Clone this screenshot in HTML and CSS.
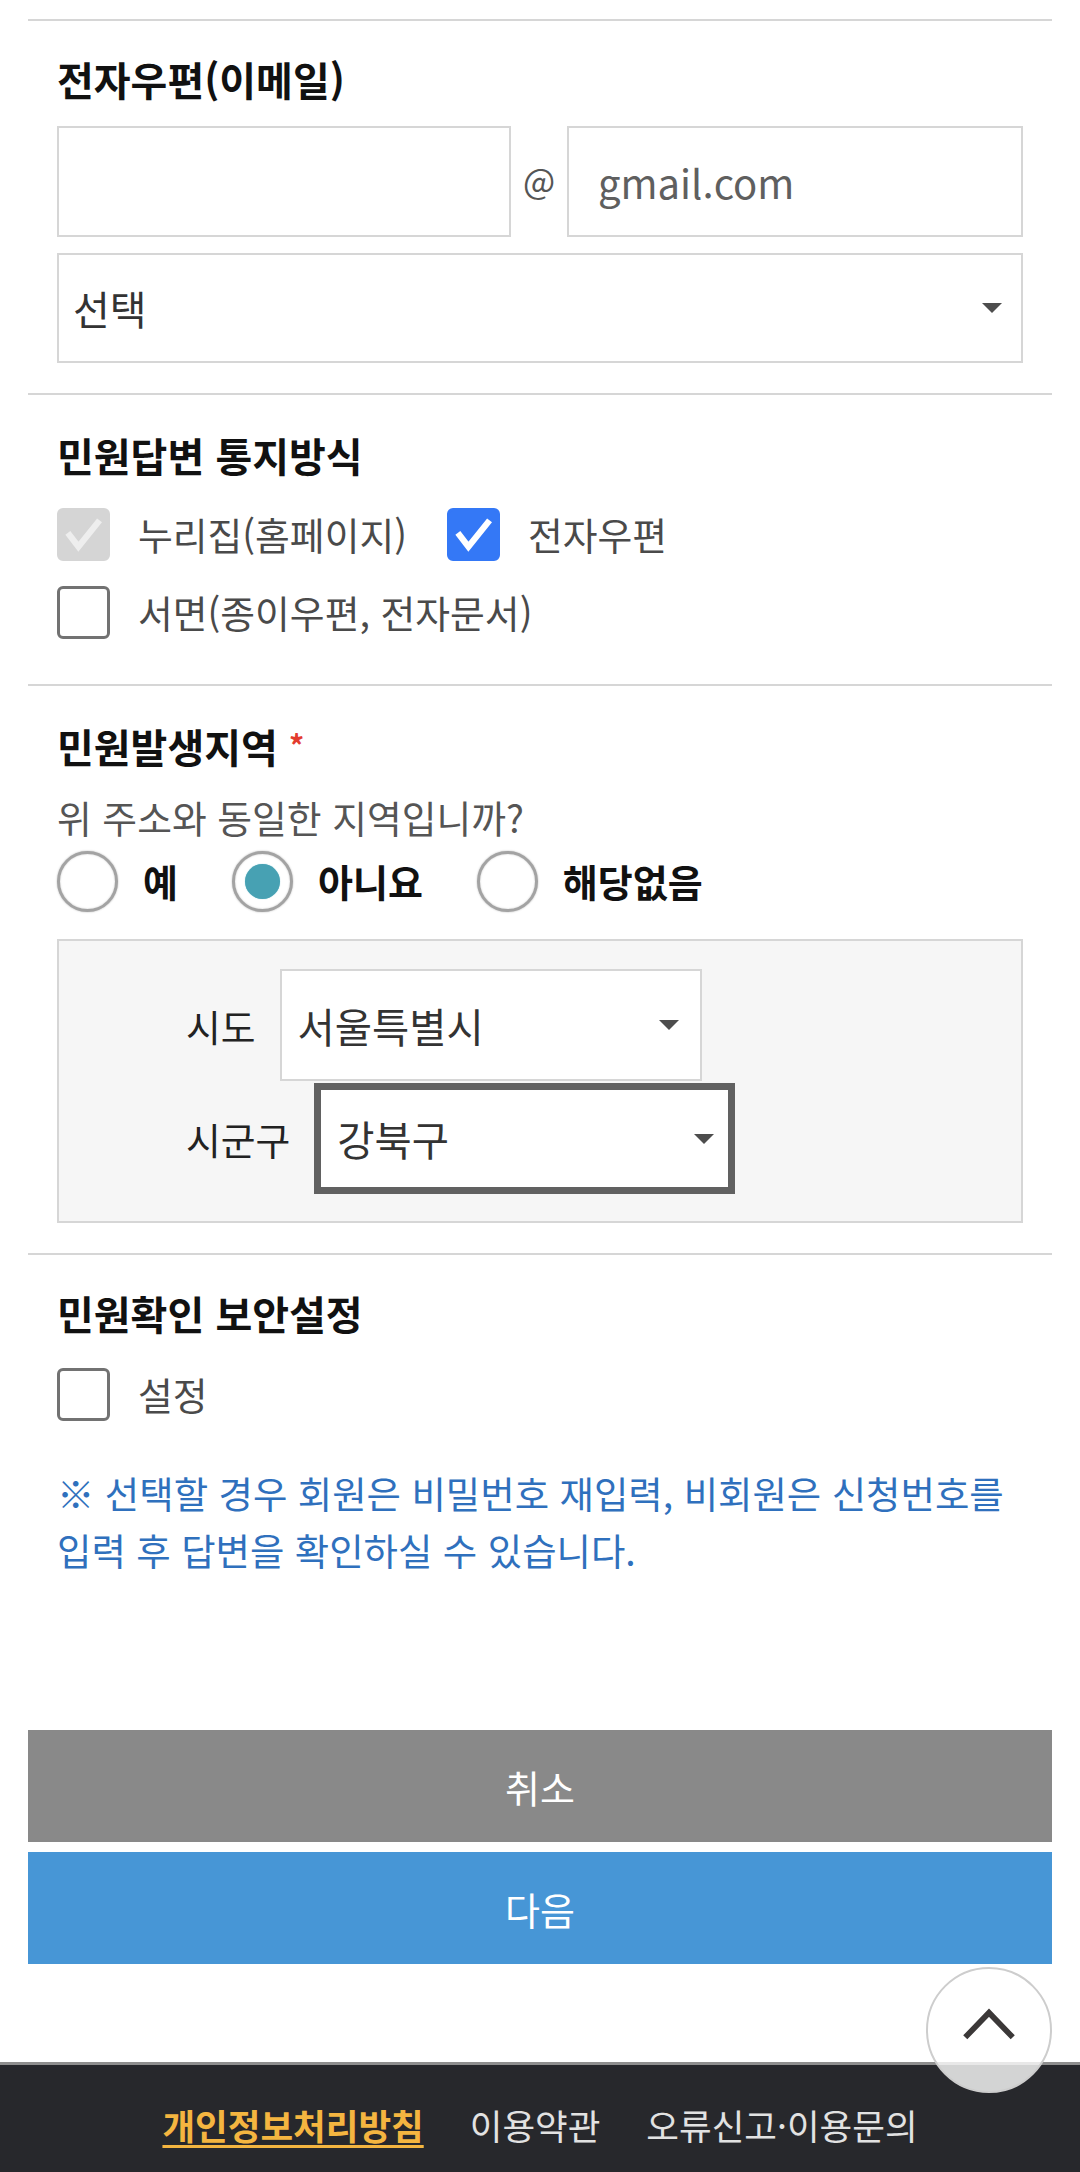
FILE: index.html
```html
<!DOCTYPE html>
<html lang="ko">
<head>
<meta charset="utf-8">
<title>민원 신청</title>
<link rel="stylesheet" href="styles.css">
</head>
<body>
<div class="page">
  <div class="content">
    <section class="sec sec-email">
      <h2 class="sec-title">전자우편(이메일)</h2>
      <div class="email-row">
        <div class="field"></div>
        <span class="at">@</span>
        <div class="field field-domain"><span class="placeholder">gmail.com</span></div>
      </div>
      <div class="select select-wide">
        <span class="select-text">선택</span>
        <span class="caret"></span>
      </div>
    </section>

    <section class="sec sec-notify">
      <h2 class="sec-title">민원답변 통지방식</h2>
      <div class="opt-row">
        <label class="opt">
          <span class="cb cb-disabled"><svg viewBox="0 0 24 24"><path d="M4 11.2 L9.4 18.2 L20.2 4.8"/></svg></span>
          <span class="opt-text">누리집(홈페이지)</span>
        </label>
        <label class="opt">
          <span class="cb cb-on"><svg viewBox="0 0 24 24"><path d="M4 11.2 L9.4 18.2 L20.2 4.8"/></svg></span>
          <span class="opt-text">전자우편</span>
        </label>
      </div>
      <div class="opt-row">
        <label class="opt">
          <span class="cb"></span>
          <span class="opt-text">서면(종이우편, 전자문서)</span>
        </label>
      </div>
    </section>

    <section class="sec sec-area">
      <h2 class="sec-title">민원발생지역 <span class="req">*</span></h2>
      <p class="question">위 주소와 동일한 지역입니까?</p>
      <div class="radio-row">
        <label class="radio-opt"><span class="radio"></span><span class="radio-text">예</span></label>
        <label class="radio-opt"><span class="radio radio-on"></span><span class="radio-text">아니요</span></label>
        <label class="radio-opt"><span class="radio"></span><span class="radio-text">해당없음</span></label>
      </div>
      <div class="area-box">
        <div class="area-row">
          <span class="area-label">시도</span>
          <div class="select select-area">
            <span class="select-text">서울특별시</span>
            <span class="caret"></span>
          </div>
        </div>
        <div class="area-row">
          <span class="area-label">시군구</span>
          <div class="select select-area select-focus">
            <span class="select-text">강북구</span>
            <span class="caret"></span>
          </div>
        </div>
      </div>
    </section>

    <section class="sec sec-secure">
      <h2 class="sec-title">민원확인 보안설정</h2>
      <div class="opt-row">
        <label class="opt">
          <span class="cb"></span>
          <span class="opt-text">설정</span>
        </label>
      </div>
      <p class="note">※ 선택할 경우 회원은 비밀번호 재입력, 비회원은 신청번호를 입력 후 답변을 확인하실 수 있습니다.</p>
    </section>

    <div class="buttons">
      <button class="btn btn-cancel" type="button">취소</button>
      <button class="btn btn-next" type="button">다음</button>
    </div>
  </div>

  <footer class="footer">
    <nav class="footer-links">
      <a class="f-link f-privacy" href="#">개인정보처리방침</a>
      <a class="f-link" href="#">이용약관</a>
      <a class="f-link" href="#">오류신고·이용문의</a>
    </nav>
  </footer>

  <button class="to-top" type="button" aria-label="맨 위로">
    <svg viewBox="0 0 60 40"><path d="M5 33 L30 7 L55 33"/></svg>
  </button>
</div>
</body>
</html>
```

FILE: styles.css
```css
* { box-sizing: border-box; }

html, body {
  margin: 0;
  padding: 0;
  background: #ffffff;
}

body {
  font-family: "Noto Sans CJK KR", "Noto Sans", sans-serif;
  color: #222;
  width: 1080px;
}

.page {
  position: relative;
  width: 1080px;
  height: 2172px;
  overflow: hidden;
}

.content {
  padding: 19px 28px 0;
}

.sec {
  border-top: 2px solid #d6d6d6;
  padding: 0 29px;
}

.sec-title {
  margin: 0;
  font-size: 40px;
  line-height: 50px;
  font-weight: 700;
  color: #111;
}

.req {
  color: #e33b2e;
  font-size: 30px;
  vertical-align: 6px;
}

/* email */
.sec-email { padding-top: 33px; padding-bottom: 30px; }

.email-row {
  display: flex;
  align-items: center;
  margin-top: 22px;
  height: 111px;
}

.field {
  flex: none;
  width: 454px;
  height: 111px;
  border: 2px solid #d6d6d6;
  background: #fff;
  display: flex;
  align-items: center;
}

.field-domain { width: 456px; padding-left: 29px; }

.placeholder {
  font-size: 40px;
  color: #5f5f5f;
}

.at {
  width: 56px;
  text-align: center;
  font-size: 34px;
  color: #555;
  line-height: 1;
  margin-top: -4px;
}

.select {
  display: flex;
  align-items: center;
  justify-content: space-between;
  background: #fff;
  border: 2px solid #d6d6d6;
}

.select-wide {
  margin-top: 16px;
  height: 110px;
  padding: 0 19px 0 14px;
}

.select-text {
  font-size: 40px;
  color: #333;
}

.caret {
  width: 0;
  height: 0;
  border-left: 10px solid transparent;
  border-right: 10px solid transparent;
  border-top: 10px solid #4d4d4d;
}

/* notify */
.sec-notify { padding-top: 35px; padding-bottom: 33px; }

.sec-notify .opt-row:first-of-type { margin-top: 15px; }

.opt-row {
  display: flex;
  align-items: center;
  height: 78px;
  gap: 40px;
}

.opt {
  display: flex;
  align-items: center;
  gap: 28px;
}

.cb {
  width: 53px;
  height: 53px;
  border: 3px solid #727272;
  border-radius: 6px;
  background: #fff;
  display: flex;
  align-items: center;
  justify-content: center;
}

.cb svg {
  width: 53px;
  height: 53px;
  fill: none;
  stroke-width: 3.2;
  stroke-linecap: butt;
  stroke-linejoin: miter;
}

.cb-disabled {
  background: #d5d5d5;
  border-color: #d5d5d5;
}

.cb-disabled svg { stroke: #eeeeee; }

.cb-on {
  background: #3478f6;
  border-color: #3478f6;
}

.cb-on svg { stroke: #ffffff; }

.opt-text {
  font-size: 37.8px;
  color: #4a4a4a;
  line-height: 50px;
}

/* area */
.sec-area { padding-top: 33px; padding-bottom: 30px; }

.question {
  margin: 21px 0 0;
  font-size: 37.8px;
  line-height: 50px;
  color: #555;
}

.radio-row {
  display: flex;
  align-items: center;
  height: 66px;
  margin-top: 6px;
}

.radio-opt {
  display: flex;
  align-items: center;
  gap: 25px;
  margin-right: 54px;
}

.radio {
  width: 61px;
  height: 61px;
  border-radius: 50%;
  border: 3px solid #a3a3a3;
  box-shadow: 0 0 2px rgba(0, 0, 0, 0.3), inset 0 0 2px rgba(0, 0, 0, 0.2);
  background: #fff;
  display: flex;
  align-items: center;
  justify-content: center;
}

.radio-on::after {
  content: "";
  width: 35px;
  height: 35px;
  border-radius: 50%;
  background: #47a1b3;
  box-shadow: 0 0 1px #7fc3d0;
}

.radio-text {
  font-size: 38px;
  font-weight: 700;
  color: #111;
  line-height: 50px;
}

.area-box {
  margin-top: 25px;
  border: 2px solid #d6d6d6;
  background: #f6f6f6;
  padding: 28px 0 27px 127px;
}

.area-row {
  display: flex;
  align-items: center;
  gap: 24px;
}

.area-row + .area-row { margin-top: 2px; }

.area-label {
  font-size: 37.8px;
  color: #222;
}

.select-area {
  width: 422px;
  height: 112px;
  padding: 0 21px 0 16px;
}

.select-focus {
  width: 421px;
  height: 111px;
  border: 7px solid #616161;
  padding: 0 14px 0 16px;
}

.select-area .select-text { font-size: 40.5px; color: #333; }

/* secure */
.sec-secure { padding-top: 33px; }

.sec-secure .opt-row { margin-top: 17px; }

.note {
  margin: 32px 0 0;
  font-size: 37.4px;
  line-height: 57px;
  color: #2f70bd;
  word-break: keep-all;
}

/* buttons */
.buttons {
  margin-top: 151px;
  display: flex;
  flex-direction: column;
  gap: 10px;
}

.btn {
  display: block;
  width: 100%;
  height: 112px;
  border: 0;
  margin: 0;
  font-family: "Noto Sans CJK KR", "Noto Sans", sans-serif;
  font-size: 38px;
  color: #fff;
}

.btn-cancel { background: #898989; }
.btn-next { background: #4796d6; }

/* footer */
.footer {
  margin-top: 98px;
  height: 120px;
  border-top: 3px solid #8e8e8e;
  background: #27282c;
  padding-top: 38px;
}

.footer-links {
  display: flex;
  justify-content: center;
  gap: 46px;
}

.f-link {
  font-size: 35.5px;
  line-height: 44px;
  color: #e2e2e2;
  text-decoration: none;
}

.f-privacy {
  color: #f4b540;
  font-weight: 700;
  text-decoration: underline;
  text-decoration-thickness: 3px;
  text-underline-offset: 5px;
}

.to-top {
  position: absolute;
  right: 28px;
  bottom: 79px;
  width: 126px;
  height: 126px;
  border-radius: 50%;
  border: 2px solid #cdcdcd;
  background: rgba(255, 255, 255, 0.8);
  padding: 0;
  display: flex;
  align-items: center;
  justify-content: center;
}

.to-top svg {
  width: 58px;
  height: 38px;
  margin-top: -10px;
  fill: none;
  stroke: #3b3838;
  stroke-width: 6;
}
```
